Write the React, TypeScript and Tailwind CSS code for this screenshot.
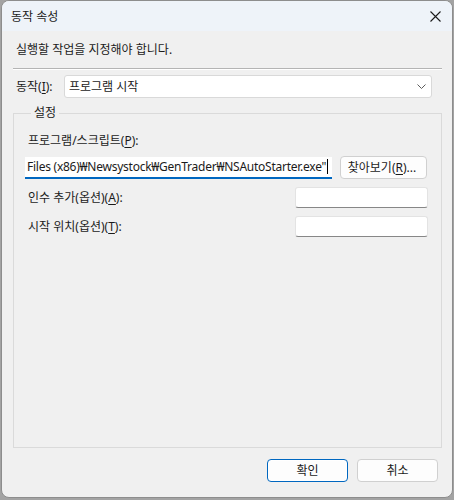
function Mn({ children }: { children: string }) {
  return <span className="underline underline-offset-[2px]">{children}</span>;
}

function TextBox() {
  return (
    <div className="h-[21px] w-[133px] rounded-[3px] border border-[#e3e3e3] border-b-[#878787] bg-white" />
  );
}

function Button({ label, primary }: { label: string; primary?: boolean }) {
  return (
    <button
      className={
        "flex h-[23px] w-[81px] items-center justify-center rounded-[4px] border bg-[#fdfdfd] text-[12px] leading-[16px] text-[#1b1b1b] " +
        (primary ? "border-[#0067c0] shadow-[inset_0_0_0_1px_#ffffff]" : "border-[#d0d0d0]")
      }
    >
      {label}
    </button>
  );
}

export default function App() {
  return (
    <div className="h-[500px] w-[454px] bg-[#a3a3a3] pl-px font-['Noto_Sans','Noto_Sans_CJK_KR',sans-serif] text-[12px] leading-[16px] text-[#1b1b1b]">
      <div className="flex h-[498px] w-[452px] flex-col overflow-hidden rounded-[8px] border border-[#8d8d8d] bg-[#f0f0f0]">
        {/* title bar */}
        <div className="flex h-[30px] shrink-0 items-center justify-between bg-[#eef3f9] pl-[9px] pr-[9px]">
          <span className="pt-px">동작 속성</span>
          <svg width="11" height="11" viewBox="0 0 11 11" className="mr-[2px]">
            <path d="M0.5 0.5 L10.5 10.5 M10.5 0.5 L0.5 10.5" stroke="#1b1b1b" strokeWidth="1.1" fill="none" />
          </svg>
        </div>

        {/* body */}
        <div className="flex flex-1 flex-col pl-[11px] pr-[10px]">
          <p className="mt-[11px] pl-[3px]">실행할 작업을 지정해야 합니다.</p>

          <div className="mt-[10px] h-0 border-t border-b border-t-[#b4b4b4] border-b-white" />

          <div className="mt-[5px] flex h-[23px] items-center">
            <span className="w-[51px] pl-[3px]">
              동작(<Mn>I</Mn>):
            </span>
            <div className="flex h-[23px] w-[368px] items-center justify-between rounded-[3px] border border-[#d9d9d9] bg-white pl-[4px] pr-[5px]">
              <span>프로그램 시작</span>
              <svg width="9" height="5" viewBox="0 0 9 5">
                <path d="M0.5 0.5 L4.5 4.5 L8.5 0.5" stroke="#5c5c5c" strokeWidth="1" fill="none" />
              </svg>
            </div>
          </div>

          <fieldset className="mt-[7px] flex flex-1 flex-col border border-[#dadada] pl-[11px] pr-[13px]">
            <legend className="ml-[6px] px-[3px]">설정</legend>

            <p className="mt-[12px] pl-[3px]">
              프로그램/스크립트(<Mn>P</Mn>):
            </p>

            <div className="mt-[7px] flex items-center gap-[8px]">
              <div className="flex h-[22px] w-[307px] items-center overflow-hidden border-b-2 border-b-[#0067c0] bg-white pl-[2px]">
                <span className="whitespace-nowrap tracking-[-0.25px]">
                  Files (x86)₩Newsystock₩GenTrader₩NSAutoStarter.exe"
                </span>
                <span className="ml-px h-[15px] w-px shrink-0 bg-black" />
              </div>
              <button className="flex h-[23px] w-[87px] items-center justify-center rounded-[4px] border border-[#d0d0d0] bg-[#fdfdfd] pr-[3px]">
                찾아보기(<Mn>R</Mn>)...
              </button>
            </div>

            <div className="mt-[8px] flex items-center justify-between">
              <span className="pl-[3px]">
                인수 추가(옵션)(<Mn>A</Mn>):
              </span>
              <TextBox />
            </div>

            <div className="mt-[8px] flex items-center justify-between">
              <span className="pl-[3px]">
                시작 위치(옵션)(<Mn>T</Mn>):
              </span>
              <TextBox />
            </div>
          </fieldset>

          <div className="mb-[15px] mr-[4px] mt-[11px] flex justify-end gap-[9px]">
            <Button label="확인" primary />
            <Button label="취소" />
          </div>
        </div>
      </div>
    </div>
  );
}
